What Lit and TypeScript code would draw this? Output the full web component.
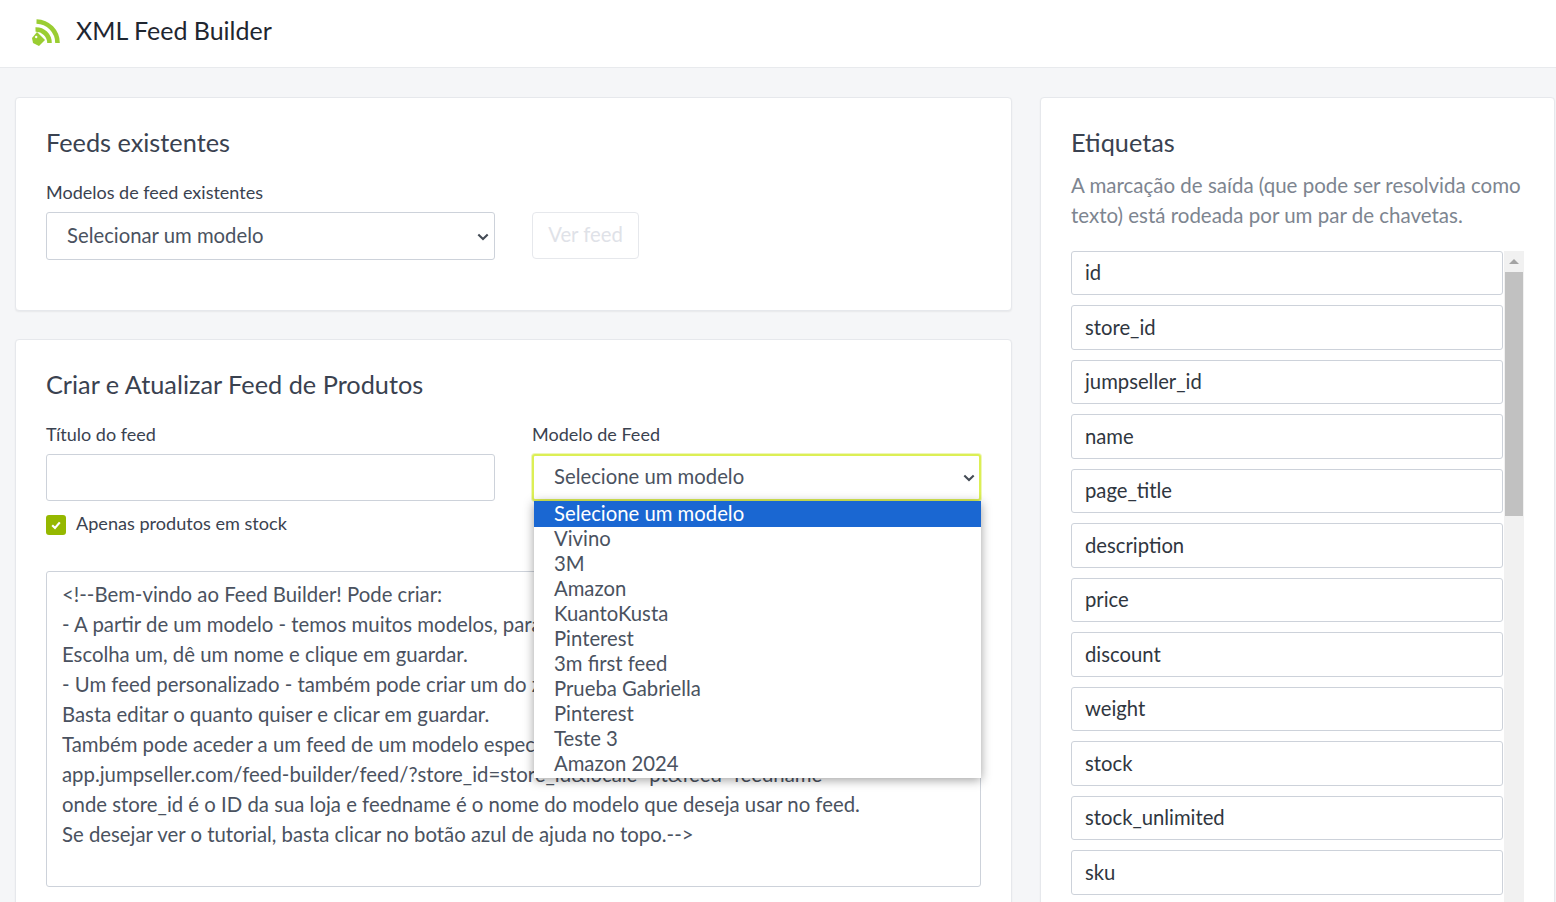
import { LitElement, html, css } from "lit";
import { customElement } from "lit/decorators.js";

const OPTIONS = ["Selecione um modelo","Vivino","3M","Amazon","KuantoKusta","Pinterest","3m first feed","Prueba Gabriella","Pinterest","Teste 3","Amazon 2024"];
const TAGS = ["id","store_id","jumpseller_id","name","page_title","description","price","discount","weight","stock","stock_unlimited","sku"];
const LINES = [
  "<!--Bem-vindo ao Feed Builder! Pode criar:",
  "- A partir de um modelo - temos muitos modelos, para que possa começar rapidamente.",
  "Escolha um, dê um nome e clique em guardar.",
  "- Um feed personalizado - também pode criar um do zero ou a partir de um modelo.",
  "Basta editar o quanto quiser e clicar em guardar.",
  "Também pode aceder a um feed de um modelo específico diretamente a partir do URL:",
  "app.jumpseller.com/feed-builder/feed/?store_id=store_id&locale=pt&feed=feedname",
  "onde store_id é o ID da sua loja e feedname é o nome do modelo que deseja usar no feed.",
  "Se desejar ver o tutorial, basta clicar no botão azul de ajuda no topo.-->",
];

const chevron = html`<svg class="chev" viewBox="0 0 12 8" fill="none" aria-hidden="true"><path d="M1.3 1.5 L6 6 L10.7 1.5" stroke="#444b55" stroke-width="2.1"/></svg>`;

@customElement("app-root")
export class AppRoot extends LitElement {
  static styles = css`
    :host { display: block; height: 902px; overflow: hidden; background: #f5f6f8; color: #2f3640; font-family: "Lato", "Liberation Sans", sans-serif; }
    * { box-sizing: border-box; }
    .top { height: 68px; background: #fff; border-bottom: 1px solid #e8eaed; display: flex; align-items: center; padding: 0 0 7px 30px; gap: 14px; }
    .top svg { width: 32px; height: 32px; display: block; }
    .top h1 { margin: 0; font-size: 25px; font-weight: 400; color: #1f2630; }
    .main { display: grid; grid-template-columns: 997px 515px; gap: 28px; padding: 29px 0 0 15px; align-items: start; }
    .col { display: flex; flex-direction: column; gap: 28px; }
    .card { background: #fff; border: 1px solid #e6e8ec; border-radius: 4px; box-shadow: 0 1px 2px rgba(0,0,0,.06); padding: 29px 30px 30px; }
    h2 { margin: 0; font-size: 25.3px; font-weight: 400; color: #3a4250; line-height: 30px; }
    .one { height: 214px; }
    .two { height: 640px; }
    label { display: block; font-size: 18px; line-height: 22px; color: #3a4250; margin: 0 0 9px; }
    .row { display: grid; grid-template-columns: 449px 449px; gap: 37px; margin-top: 24px; }
    .sel-wrap { position: relative; }
    select { display: block; appearance: none; -webkit-appearance: none; width: 100%; height: 48px; border: 1px solid #cdd2da; border-radius: 3px; background: #fff; color: #4a5260; font: inherit; font-size: 20.3px; padding: 0 16px 3px 20px; }
    .chev { position: absolute; right: 6px; top: 21px; width: 12px; height: 8px; }
    .input { height: 47px; border: 1px solid #cdd2da; border-radius: 3px; background: #fff; }
    .btn { width: 107px; height: 47px; border: 1px solid #e6e8ec; border-radius: 4px; background: #fff; color: #dfe2e8; font: inherit; font-size: 20.3px; font-weight: 400; padding: 0 0 3px; }
    .btnwrap { display: flex; align-items: flex-end; padding-bottom: 1px; }
    .focus select { height: 47px; border: 2px solid #dcef55; padding-left: 20px; padding-bottom: 3px; box-shadow: 0 0 0 1px #eef6b8; }
    .focus .chev { right: 6px; top: 20px; }
    .list { position: absolute; z-index: 3; left: 2px; right: 0; top: 47px; padding-bottom: 2px; background: #fff; box-shadow: 0 2px 10px rgba(0,0,0,.38); font-size: 20.3px; line-height: 24px; color: #4a5260; }
    .list div { padding-left: 20px; height: 25px; }
    .list .sel { background: #1a67d2; color: #fff; height: 26px; margin-bottom: -1px; }
    .check { display: flex; align-items: center; gap: 10px; margin-top: 11px; font-size: 18.1px; color: #3a4250; height: 22px; }
    .box { width: 20px; height: 20px; border-radius: 3px; background: #95b800; display: flex; align-items: center; justify-content: center; margin-top: 4px; }
    .box svg { width: 12px; height: 12px; }
    .area { margin-top: 37px; height: 316px; border: 1px solid #cdd2da; border-radius: 3px; padding: 7px 15px; font-size: 20.35px; line-height: 30px; color: #4a5260; white-space: pre; overflow: hidden; }
    .three { padding-bottom: 0; height: 900px; }
    .desc { margin: 13px 0 20.9px; font-size: 20.5px; line-height: 30px; color: #7d8590; white-space: nowrap; }
    .tagrow { display: flex; gap: 1px; }
    .tags { flex: 1; display: flex; flex-direction: column; gap: 10px; min-width: 0; }
    .tag { height: 44.5px; flex: none; border: 1px solid #cdd2da; border-radius: 3px; padding: 0 13px 2px; display: flex; align-items: center; font-size: 20.25px; color: #2f3640; }
    .bar { width: 20px; flex: none; background: #f1f1f1; position: relative; height: 700px; padding: 21px 1px 0; }
    .arrow { position: absolute; top: 8px; left: 5px; width: 0; height: 0; border-left: 5px solid transparent; border-right: 5px solid transparent; border-bottom: 5px solid #a3a3a3; }
    .thumb { height: 244px; background: #c1c1c1; }
  `;
  render() {
    return html`
      <div class="top">
        <svg viewBox="0 0 32 32" fill="none" aria-hidden="true">
          <path d="M6.5 7.5 A21.5 21.5 0 0 1 27.5 29" stroke="#9acd32" stroke-width="4.6"/>
          <path d="M5.5 15.5 A13.5 13.5 0 0 1 19.5 29" stroke="#9acd32" stroke-width="4.6"/>
          <path d="M2 24 L7 18 L15 26 L9 32 L3 29 Z" fill="#9acd32"/>
          <circle cx="6.2" cy="23" r="1.2" fill="#fff"/>
        </svg>
        <h1>XML Feed Builder</h1>
      </div>
      <div class="main">
        <div class="col">
          <section class="card one">
            <h2>Feeds existentes</h2>
            <div class="row">
              <div>
                <label>Modelos de feed existentes</label>
                <div class="sel-wrap">
                  <select><option>Selecionar um modelo</option></select>
                  ${chevron}
                </div>
              </div>
              <div class="btnwrap"><button class="btn" disabled>Ver feed</button></div>
            </div>
          </section>
          <section class="card two">
            <h2>Criar e Atualizar Feed de Produtos</h2>
            <div class="row">
              <div>
                <label>Título do feed</label>
                <div class="input"></div>
                <div class="check">
                  <span class="box"><svg viewBox="0 0 12 12" fill="none"><path d="M2.2 6.2 L5 9 L9.8 3.4" stroke="#fff" stroke-width="2.2"/></svg></span>
                  Apenas produtos em stock
                </div>
              </div>
              <div>
                <label>Modelo de Feed</label>
                <div class="sel-wrap focus">
                  <select><option>Selecione um modelo</option></select>
                  ${chevron}
                  <div class="list">
                    ${OPTIONS.map((o, i) => html`<div class=${i === 0 ? "sel" : ""}>${o}</div>`)}
                  </div>
                </div>
              </div>
            </div>
            <div class="area">${LINES.join("\n")}</div>
          </section>
        </div>
        <section class="card three">
          <h2>Etiquetas</h2>
          <p class="desc">A marcação de saída (que pode ser resolvida como<br />texto) está rodeada por um par de chavetas.</p>
          <div class="tagrow">
            <div class="tags">${TAGS.map((t) => html`<div class="tag">${t}</div>`)}</div>
            <div class="bar"><span class="arrow"></span><div class="thumb"></div></div>
          </div>
        </section>
      </div>
    `;
  }
}
